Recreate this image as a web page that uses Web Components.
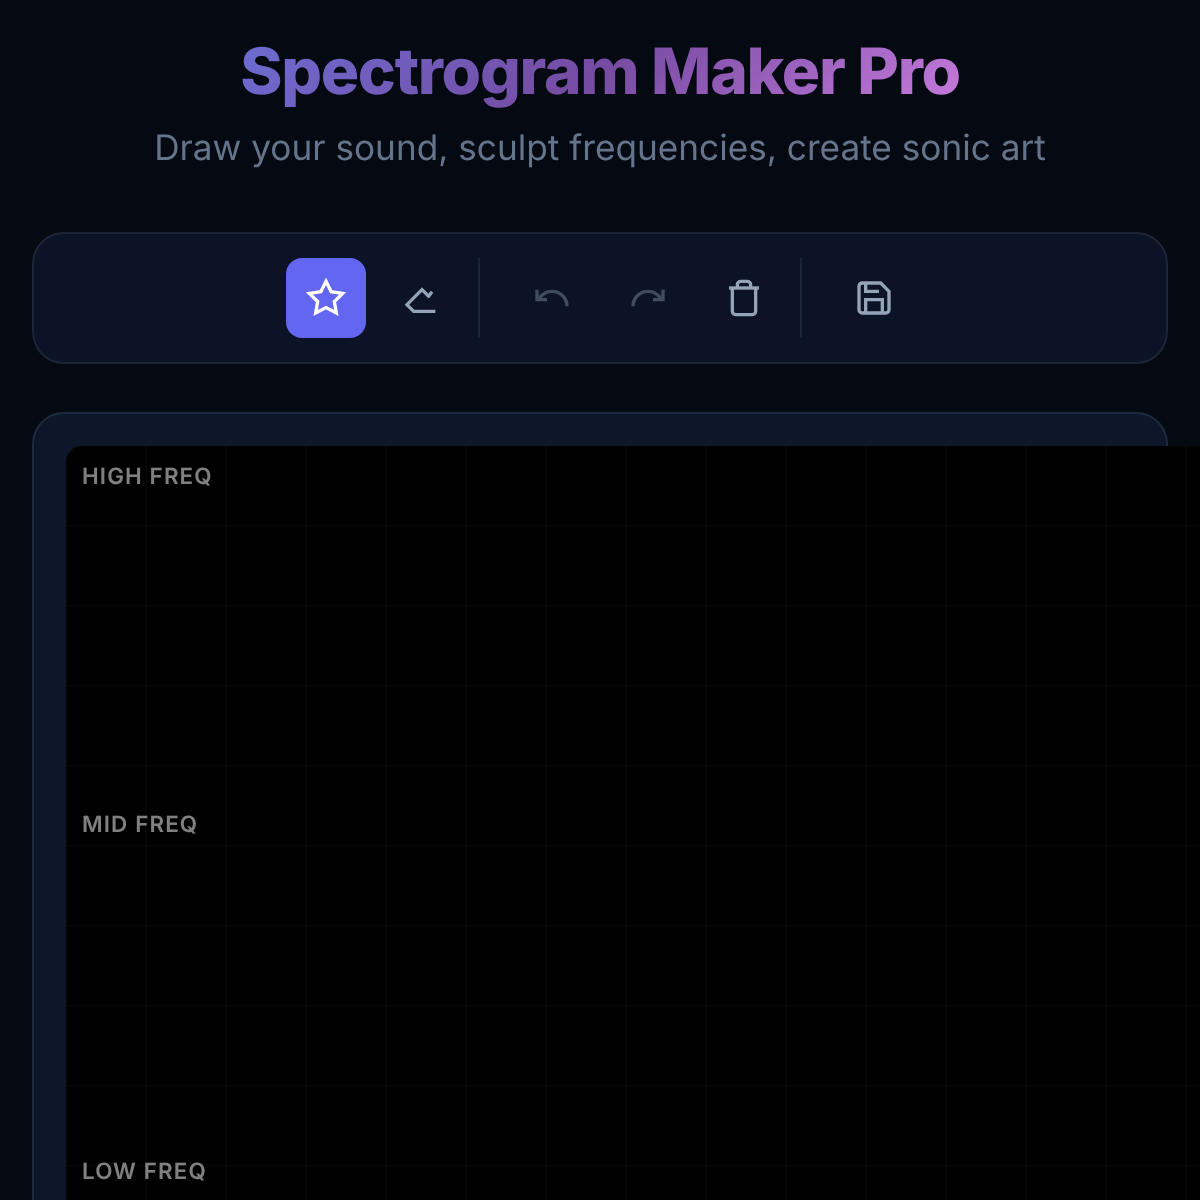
<!DOCTYPE html>
<html lang="en">
<head>
<meta charset="utf-8">
<title>Spectrogram Maker Pro</title>
<style>
  html, body { margin: 0; height: 1200px; overflow: hidden; background: #050912; }
  body { font-family: Inter, "Liberation Sans", sans-serif; text-rendering: geometricPrecision; }
</style>
</head>
<body>
<spectro-app>
  <spectro-header slot="header">
    <span slot="title">Spectrogram Maker Pro</span>
    <span slot="subtitle">Draw your sound, sculpt frequencies, create sonic art</span>
  </spectro-header>
  <tool-bar slot="toolbar">
    <tool-group divided>
      <tool-button icon="star" active></tool-button>
      <tool-button icon="eraser"></tool-button>
    </tool-group>
    <tool-group divided>
      <tool-button icon="undo" disabled></tool-button>
      <tool-button icon="redo" disabled></tool-button>
      <tool-button icon="trash"></tool-button>
    </tool-group>
    <tool-group>
      <tool-button icon="save"></tool-button>
    </tool-group>
  </tool-bar>
  <canvas-card slot="canvas">
    <span slot="high">HIGH FREQ</span>
    <span slot="mid">MID FREQ</span>
    <span slot="low">LOW FREQ</span>
  </canvas-card>
</spectro-app>

<script>
const ICONS = {
  star: '<polygon points="12 2 15.09 8.26 22 9.27 17 14.14 18.18 21.02 12 17.77 5.82 21.02 7 14.14 2 9.27 8.91 8.26 12 2"/>',
  eraser: '<path d="M20 20H7l-4-4 9-9 4.500 4.500"/><path d="M18 8.300l-2.500 3.200"/>',
  undo: '<path d="M3 7v6h6"/><path d="M21 17a9 9 0 0 0-9-9 9 9 0 0 0-6 2.300L3 13"/>',
  redo: '<path d="M21 7v6h-6"/><path d="M3 17a9 9 0 0 1 9-9 9 9 0 0 1 6 2.300l3 2.700"/>',
  trash: '<path d="M3 6h18"/><path d="M19 6v14a2 2 0 0 1-2 2H7a2 2 0 0 1-2-2V6"/><path d="M8 6V4a2 2 0 0 1 2-2h4a2 2 0 0 1 2 2v2"/>',
  save: '<path d="M19 21H5a2 2 0 0 1-2-2V5a2 2 0 0 1 2-2h11l5 5v11a2 2 0 0 1-2 2z"/><path d="M17 21v-8H7v8"/><path d="M7 3v5h8"/>'
};

class SpectroApp extends HTMLElement {
  constructor() {
    super();
    this.attachShadow({ mode: 'open' });
    this.shadowRoot.innerHTML = `
      <style>
        :host { display: flex; flex-direction: column; gap: 48px; padding: 32px; width: 1200px; box-sizing: border-box; }
      </style>
      <slot name="header"></slot>
      <slot name="toolbar"></slot>
      <slot name="canvas"></slot>
    `;
  }
}

class SpectroHeader extends HTMLElement {
  constructor() {
    super();
    this.attachShadow({ mode: 'open' });
    this.shadowRoot.innerHTML = `
      <style>
        :host { display: block; text-align: center; height: 152px; }
        h1 {
          margin: 0;
          font: 800 64px/80px Inter, "Liberation Sans", sans-serif;
          letter-spacing: -1.28px;
          background: linear-gradient(135deg, #667eea 0%, #764ba2 50%, #f093fb 100%);
          -webkit-background-clip: text;
          background-clip: text;
          color: transparent;
        }
        p {
          margin: 16px 0 0;
          font: 400 35.200px/40px Inter, "Liberation Sans", sans-serif;
          color: #64748b;
          will-change: transform;
        }
      </style>
      <h1><slot name="title"></slot></h1>
      <p><slot name="subtitle"></slot></p>
    `;
  }
}

class ToolBar extends HTMLElement {
  constructor() {
    super();
    this.attachShadow({ mode: 'open' });
    this.shadowRoot.innerHTML = `
      <style>
        :host {
          display: flex; justify-content: center; gap: 32px;
          padding: 24px;
          background: #0c1326;
          border: 2px solid #1c2536;
          border-radius: 32px;
        }
      </style>
      <slot></slot>
    `;
  }
}

class ToolGroup extends HTMLElement {
  constructor() {
    super();
    this.attachShadow({ mode: 'open' });
    this.shadowRoot.innerHTML = `
      <style>
        :host { display: flex; gap: 16px; }
        :host([divided]) { padding-right: 16px; border-right: 2px solid #1c2536; }
      </style>
      <slot></slot>
    `;
  }
}

class ToolButton extends HTMLElement {
  constructor() {
    super();
    this.attachShadow({ mode: 'open' });
    const ICON = ICONS[this.getAttribute('icon')];
    this.shadowRoot.innerHTML = `
      <style>
        :host { display: flex; align-items: center; justify-content: center; width: 80px; height: 80px; border-radius: 16px; color: #94a3b8; }
        :host([active]) { background: #6366f1; color: #fff; }
        :host([disabled]) svg { opacity: .4; }
        svg { width: 40px; height: 40px; fill: none; stroke: currentColor; stroke-width: 2; }
      </style>
      <svg viewBox="0 0 24 24">${ICON}</svg>
    `;
  }
}

class CanvasCard extends HTMLElement {
  constructor() {
    super();
    this.attachShadow({ mode: 'open' });
    this.shadowRoot.innerHTML = `
      <style>
        :host {
          display: block;
          padding: 32px;
          background: #0e172a;
          border: 2px solid #1c2a40;
          border-radius: 32px;
        }
        .canvas {
          position: relative;
          width: 1200px; height: 756px;
          border-radius: 16px 0 0 0;
          background-color: #000;
          /* soft lines, they sit centred on the 80px tile edge */
          background-image:
            linear-gradient(transparent, rgba(255,255,255,.03) 1.500px, transparent 3px),
            linear-gradient(90deg, transparent, rgba(255,255,255,.03) 1.500px, transparent 3px);
          background-size: 80px 80px;
          background-position: -1.500px -1.500px;
        }
        .labels {
          position: absolute; inset: 17px 16px 16px;
          display: flex; flex-direction: column; justify-content: space-between; align-items: flex-start;
          font: 600 22.400px/28px Inter, "Liberation Sans", sans-serif;
          letter-spacing: 1.120px;
          color: rgba(255,255,255,.5);
          will-change: transform;
        }
      </style>
      <div class="canvas">
        <div class="labels">
          <slot name="high"></slot>
          <slot name="mid"></slot>
          <slot name="low"></slot>
        </div>
      </div>
    `;
  }
}

customElements.define('spectro-app', SpectroApp);
customElements.define('spectro-header', SpectroHeader);
customElements.define('tool-bar', ToolBar);
customElements.define('tool-group', ToolGroup);
customElements.define('tool-button', ToolButton);
customElements.define('canvas-card', CanvasCard);
</script>
</body>
</html>
